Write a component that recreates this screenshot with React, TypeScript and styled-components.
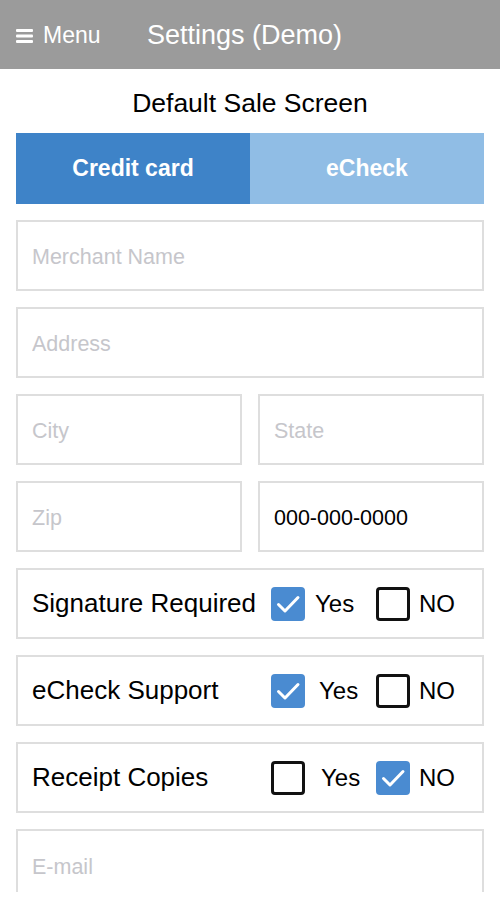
import React from 'react';
import styled, { createGlobalStyle } from 'styled-components';

const GlobalStyle = createGlobalStyle`
    html, body {
        margin: 0;
        padding: 0;
        overflow: hidden;
        background: #ffffff;
        font-family: 'Liberation Sans', Arial, Helvetica, sans-serif;
    }
    * {
        box-sizing: border-box;
    }
`;

interface IToggleRow {
    label: string;
    yes: boolean;
    yesOffset?: number;
}

const toggles: IToggleRow[] = [
    { label: 'Signature Required', yes: true, yesOffset: 10 },
    { label: 'eCheck Support', yes: true, yesOffset: 14 },
    { label: 'Receipt Copies', yes: false, yesOffset: 16 },
];

function Hamburger() {
    return (
        <svg width="17" height="14" viewBox="0 0 17 14">
            <rect x="0" y="0" width="17" height="3" rx="1" fill="#fff" />
            <rect x="0" y="5.5" width="17" height="3" rx="1" fill="#fff" />
            <rect x="0" y="11" width="17" height="3" rx="1" fill="#fff" />
        </svg>
    );
}

function CheckBox({ checked }: { checked: boolean }) {
    return (
        <StyledBox checked={checked}>
            {checked && (
                <svg width="34" height="34" viewBox="0 0 34 34">
                    <path
                        d="M7.5 17.5 L14 24 L27 10.5"
                        fill="none"
                        stroke="#fff"
                        strokeWidth="3"
                        strokeLinecap="round"
                        strokeLinejoin="round"
                    />
                </svg>
            )}
        </StyledBox>
    );
}

function ToggleRow({ data }: { data: IToggleRow }) {
    return (
        <StyledToggle>
            <div className="label">{data.label}</div>
            <StyledOption width={105}>
                <CheckBox checked={data.yes} />
                <span style={{ marginLeft: data.yesOffset }}>Yes</span>
            </StyledOption>
            <StyledOption>
                <CheckBox checked={!data.yes} />
                <span style={{ marginLeft: 9 }}>NO</span>
            </StyledOption>
        </StyledToggle>
    );
}

function App() {
    return (
        <>
            <GlobalStyle />
            <StyledHeader>
                <div className="menu">
                    <Hamburger />
                    <span>Menu</span>
                </div>
                <div className="title">Settings (Demo)</div>
            </StyledHeader>
            <StyledHeading>Default Sale Screen</StyledHeading>
            <StyledBody>
                <StyledTabs>
                    <StyledTab active>Credit card</StyledTab>
                    <StyledTab>eCheck</StyledTab>
                </StyledTabs>
                <StyledField placeholder="Merchant Name" readOnly />
                <StyledField placeholder="Address" readOnly />
                <StyledPair>
                    <StyledField placeholder="City" readOnly />
                    <StyledField placeholder="State" readOnly />
                </StyledPair>
                <StyledPair>
                    <StyledField placeholder="Zip" readOnly />
                    <StyledField defaultValue="000-000-0000" readOnly />
                </StyledPair>
                {toggles.map((t) => (
                    <ToggleRow key={t.label} data={t} />
                ))}
                <StyledField placeholder="E-mail" readOnly cut />
            </StyledBody>
        </>
    );
}

export default App;

const StyledHeader = styled.header`
    height: 69px;
    background: #9b9b9b;
    color: #ffffff;
    display: flex;
    align-items: center;
    padding: 2px 16px 0;
    .menu {
        display: flex;
        align-items: center;
        gap: 10px;
        font-size: 23px;
        width: 131px;
    }
    .title {
        font-size: 27px;
    }
`;

const StyledHeading = styled.h1`
    margin: 0;
    height: 64px;
    display: flex;
    align-items: center;
    justify-content: center;
    font-size: 26.5px;
    font-weight: 400;
    color: #000;
    padding-top: 4px;
`;

const StyledBody = styled.main`
    display: flex;
    flex-direction: column;
    gap: 16px;
    padding: 0 16px;
`;

const StyledTabs = styled.div`
    display: grid;
    grid-template-columns: 234px 1fr;
    height: 71px;
`;

const StyledTab = styled.div<{ active?: boolean }>`
    display: flex;
    align-items: center;
    justify-content: center;
    background: ${(p) => (p.active ? '#3e83c8' : '#90bde5')};
    color: #ffffff;
    font-size: 23px;
    font-weight: 700;
`;

const StyledField = styled.input<{ cut?: boolean }>`
    all: unset;
    box-sizing: border-box;
    display: block;
    width: 100%;
    height: ${(p) => (p.cut ? '63px' : '71px')};
    border: 2px solid #dedede;
    border-bottom: ${(p) => (p.cut ? 'none' : '2px solid #dedede')};
    padding: ${(p) => (p.cut ? '12px 14px 0' : '3px 14px 0')};
    font-family: 'Liberation Sans', Arial, sans-serif;
    font-size: 21.5px;
    color: #000;
    &::placeholder {
        color: #c6c6cb;
    }
`;

const StyledPair = styled.div`
    display: grid;
    grid-template-columns: 1fr 1fr;
    gap: 16px;
`;

const StyledToggle = styled.div`
    display: flex;
    align-items: center;
    height: 71px;
    border: 2px solid #dedede;
    padding: 0 0 0 14px;
    color: #000;
    .label {
        width: 239px;
        font-size: 26px;
        white-space: nowrap;
    }
`;

const StyledOption = styled.div<{ width?: number }>`
    display: flex;
    align-items: center;
    width: ${(p) => (p.width ? `${p.width}px` : 'auto')};
    font-size: 24px;
`;

const StyledBox = styled.div<{ checked: boolean }>`
    width: 34px;
    height: 34px;
    flex: none;
    border-radius: 4px;
    background: ${(p) => (p.checked ? '#4a8bd1' : '#ffffff')};
    border: ${(p) => (p.checked ? 'none' : '3px solid #111')};
    svg {
        display: block;
    }
`;
